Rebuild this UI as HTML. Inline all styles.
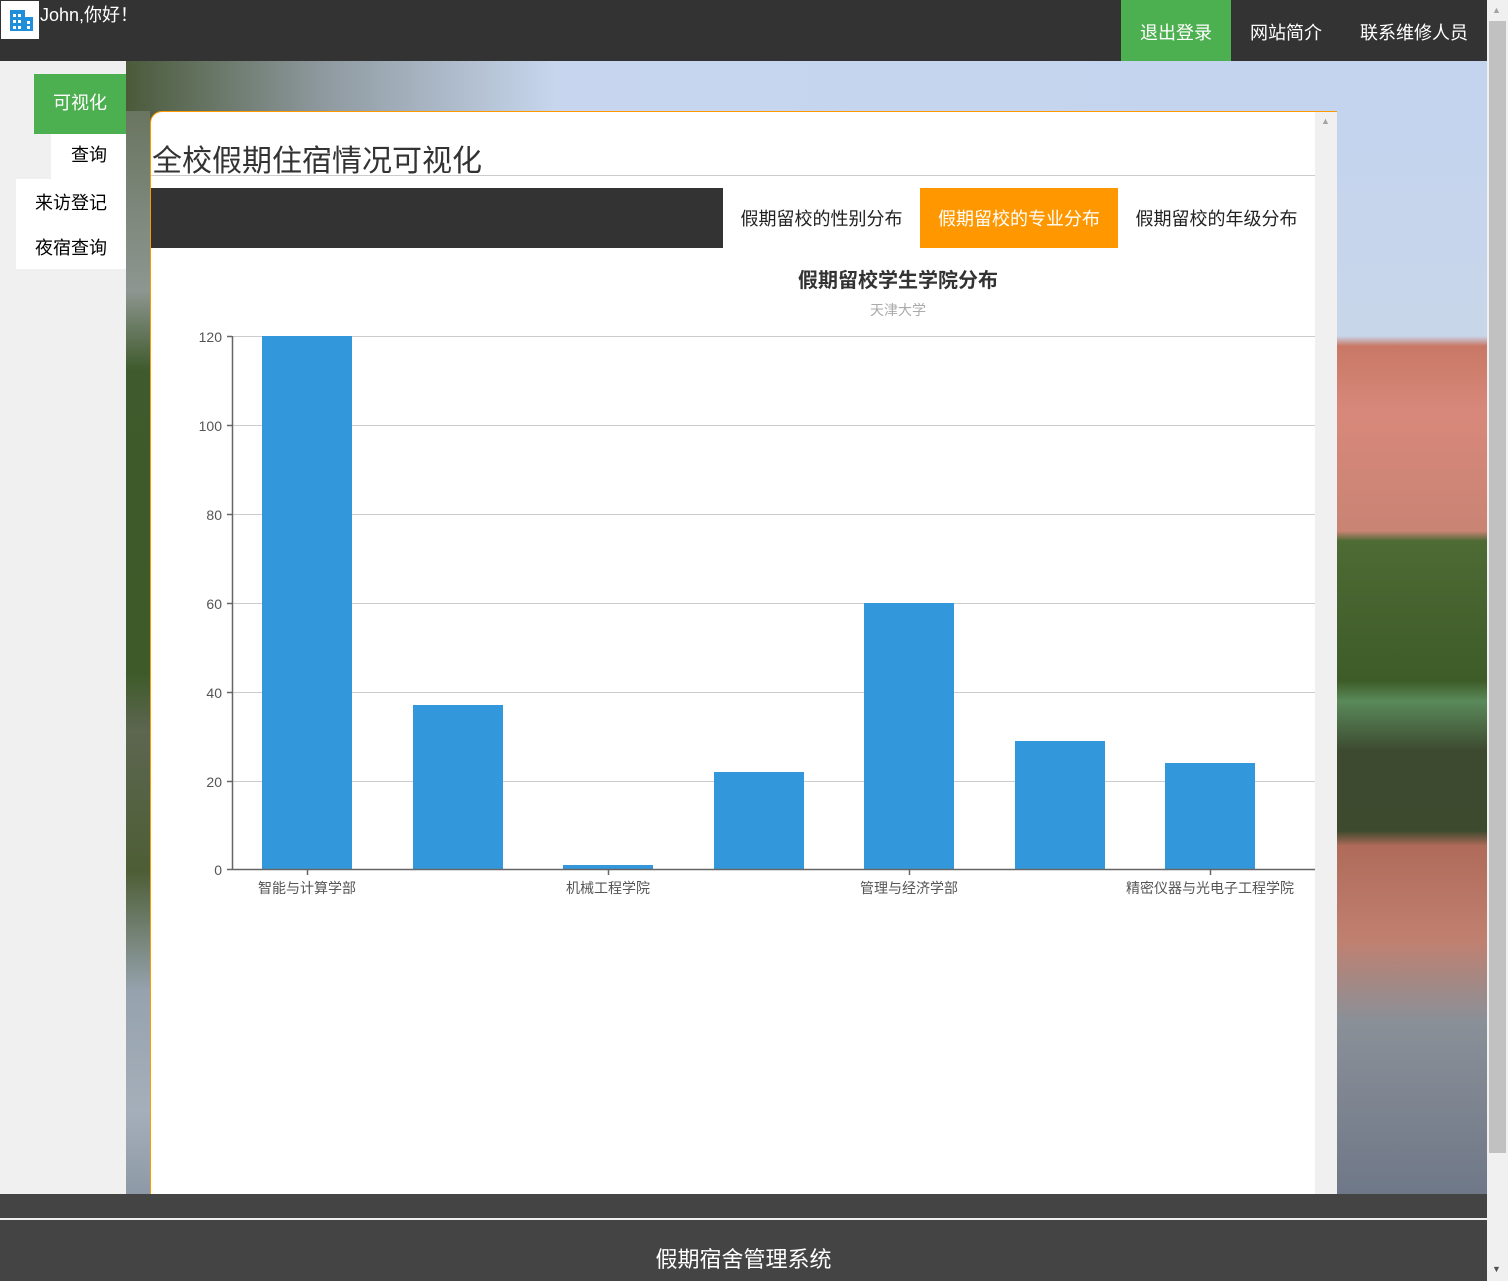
<!DOCTYPE html>
<html><head><meta charset="utf-8"><style>
*{margin:0;padding:0;box-sizing:border-box}
body{width:1508px;height:1281px;overflow:hidden;position:relative;background:#f0f0f0;font-family:"Liberation Sans","Noto Sans CJK SC",sans-serif}
.a{position:absolute}
.bg{left:126px;top:61px;width:1361px;height:1133px;background:linear-gradient(90deg,#4a5a3a 0px,#8f9aa0 200px,#c7d6ee 430px,#c4d4ee 1210px,#c4d4ee 1361px)}
.lstrip{left:126px;top:111px;width:24px;height:1083px;background:linear-gradient(180deg,#6a7560 0,#8d9690 180px,#3f5a2c 260px,#3d5a28 560px,#5d6650 620px,#4d5e35 760px,#96a2ad 880px,#a5afba 1000px,#8d99a6 1083px)}
.rstrip{left:1337px;top:111px;width:150px;height:1083px;background:linear-gradient(180deg,#c4d4ee 0,#c8d6ea 225px,#c97866 235px,#d8887a 300px,#c98474 420px,#4e6a35 430px,#3d5c28 570px,#5a8a5a 590px,#3d4a30 640px,#3e4a2e 720px,#b06b5a 735px,#c08070 830px,#8a9098 910px,#6f7888 1083px)}
</style></head><body>
<div class="a bg"></div>
<div class="a lstrip"></div>
<div class="a rstrip"></div>
<div class="a" style="left:0;top:61px;width:126px;height:1133px;background:#f0f0f0"></div>
<div class="a" style="left:0;top:0;width:1487px;height:61px;background:#333"></div>
<div class="a" style="left:1px;top:1px;width:38px;height:38px;background:#fff"></div>
<svg class="a" style="left:8px;top:7px" width="26" height="26" viewBox="0 0 26 26"><rect x="2" y="3" width="15" height="21" fill="#1f8fdc"/><rect x="17" y="10" width="8" height="14" fill="#1f8fdc"/><g fill="#fff"><rect x="5" y="7" width="3" height="3"/><rect x="10" y="7" width="3" height="3"/><rect x="5" y="13" width="3" height="3"/><rect x="10" y="13" width="3" height="3"/><rect x="5" y="19" width="3" height="3"/><rect x="10" y="19" width="3" height="3"/><rect x="19" y="14" width="3" height="3"/><rect x="19" y="19" width="3" height="3"/></g></svg>
<div class="a" style="left:40px;top:1px;color:#fff;font-size:18px">John,你好！</div>
<div class="a" style="left:1121px;top:0;width:110px;height:61px;background:#4caf50"></div>
<div class="a" style="left:1121px;top:19px;width:110px;text-align:center;color:#fff;font-size:18px">退出登录</div>
<div class="a" style="left:1231px;top:19px;width:110px;text-align:center;color:#fff;font-size:18px">网站简介</div>
<div class="a" style="left:1341px;top:19px;width:146px;text-align:center;color:#fff;font-size:18px">联系维修人员</div>
<div class="a" style="left:1487px;top:0;width:21px;height:1281px;background:#f0f0f0"></div>
<div class="a" style="left:1489px;top:21px;width:17px;height:1132px;background:#c1c1c1"></div>
<div class="a" style="left:1492px;top:5px;font-size:9px;color:#a3a3a3">▲</div>
<div class="a" style="left:1492px;top:1264px;font-size:9px;color:#505050">▼</div>
<div class="a" style="left:34px;top:74px;width:92px;height:60px;background:#4caf50;color:#fff;font-size:18px;text-align:center;line-height:58px">可视化</div>
<div class="a" style="left:51px;top:134px;width:75px;height:45px;background:#fff;font-size:18px;line-height:42px;text-align:right;padding-right:19px;color:#000">查询</div>
<div class="a" style="left:16px;top:179px;width:110px;height:90px;background:#fff;font-size:18px;color:#000"><div style="position:absolute;right:19px;top:10px">来访登记</div><div style="position:absolute;right:19px;top:55px">夜宿查询</div></div>
<div class="a" style="left:150px;top:111px;width:1187px;height:1083px;background:#fff;border-top:1px solid #f90;border-left:1px solid #f90;border-top-left-radius:12px"></div>
<div class="a" style="left:1315px;top:112px;width:22px;height:1082px;background:#f0f0f0"></div>
<div class="a" style="left:1321px;top:116px;font-size:9px;color:#a3a3a3">▲</div>
<div class="a" style="left:152px;top:136px;font-size:30px;color:#333">全校假期住宿情况可视化</div>
<div class="a" style="left:151px;top:175px;width:1164px;height:1px;background:#ccc"></div>
<div class="a" style="left:151px;top:188px;width:572px;height:60px;background:#333"></div>
<div class="a" style="left:723px;top:205px;width:197px;text-align:center;font-size:18px;color:#222">假期留校的性别分布</div>
<div class="a" style="left:920px;top:188px;width:198px;height:60px;background:#ff9800"></div>
<div class="a" style="left:920px;top:205px;width:198px;text-align:center;font-size:18px;color:#fff">假期留校的专业分布</div>
<div class="a" style="left:1118px;top:205px;width:197px;text-align:center;font-size:18px;color:#222">假期留校的年级分布</div>
<svg class="a" style="left:0;top:0" width="1508" height="1281">
<text x="898" y="287" text-anchor="middle" font-size="20" font-weight="bold" fill="#333" font-family="Liberation Sans,Noto Sans CJK SC,sans-serif">假期留校学生学院分布</text>
<text x="898" y="315" text-anchor="middle" font-size="14" fill="#aaa" font-family="Liberation Sans,Noto Sans CJK SC,sans-serif">天津大学</text>
<g stroke="#ccc" stroke-width="1">
<line x1="232" y1="336.5" x2="1315" y2="336.5"/><line x1="232" y1="425.5" x2="1315" y2="425.5"/><line x1="232" y1="514.5" x2="1315" y2="514.5"/><line x1="232" y1="603.5" x2="1315" y2="603.5"/><line x1="232" y1="692.5" x2="1315" y2="692.5"/><line x1="232" y1="781.5" x2="1315" y2="781.5"/></g>
<g fill="#3398db">
<rect x="262" y="336" width="90" height="533"/><rect x="413" y="705" width="90" height="164"/><rect x="563" y="865" width="90" height="4"/><rect x="714" y="772" width="90" height="97"/><rect x="864" y="603" width="90" height="266"/><rect x="1015" y="741" width="90" height="128"/><rect x="1165" y="763" width="90" height="106"/></g>
<g stroke="#666" stroke-width="1.5"><line x1="232.5" y1="336" x2="232.5" y2="870"/><line x1="227" y1="869.5" x2="1315" y2="869.5"/>
<line x1="227" y1="336.5" x2="232" y2="336.5"/><line x1="227" y1="425.5" x2="232" y2="425.5"/><line x1="227" y1="514.5" x2="232" y2="514.5"/><line x1="227" y1="603.5" x2="232" y2="603.5"/><line x1="227" y1="692.5" x2="232" y2="692.5"/><line x1="227" y1="781.5" x2="232" y2="781.5"/>
<line x1="307.5" y1="870" x2="307.5" y2="875"/><line x1="608.5" y1="870" x2="608.5" y2="875"/><line x1="909.5" y1="870" x2="909.5" y2="875"/><line x1="1210.5" y1="870" x2="1210.5" y2="875"/></g>
<g font-size="14" fill="#555" text-anchor="end" font-family="Liberation Sans,sans-serif">
<text x="222" y="342">120</text><text x="222" y="431">100</text><text x="222" y="520">80</text><text x="222" y="609">60</text><text x="222" y="698">40</text><text x="222" y="787">20</text><text x="222" y="875">0</text></g>
<g font-size="14" fill="#555" text-anchor="middle" font-family="Liberation Sans,Noto Sans CJK SC,sans-serif">
<text x="307" y="893">智能与计算学部</text><text x="608" y="893">机械工程学院</text><text x="909" y="893">管理与经济学部</text><text x="1210" y="893">精密仪器与光电子工程学院</text></g>
</svg>
<div class="a" style="left:0;top:1194px;width:1487px;height:87px;background:#444"></div>
<div class="a" style="left:0;top:1218px;width:1487px;height:2px;background:#eee"></div>
<div class="a" style="left:0;top:1242px;width:1487px;text-align:center;color:#fff;font-size:22px">假期宿舍管理系统</div>
</body></html>
